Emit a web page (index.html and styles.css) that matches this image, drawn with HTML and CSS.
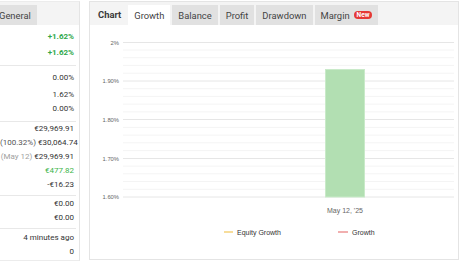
FILE: index.html
```html
<!DOCTYPE html>
<html lang="en">
<head>
    <meta charset="UTF-8">
    <title>Account - Growth</title>
    <link rel="stylesheet" href="styles.css">
</head>
<body>
    <div class="page">
        <div class="side">
            <div class="tabbar">
                <span class="tab general">General</span>
            </div>
            <div class="group g1">
                <div class="row h16 pos">+1.62%</div>
                <div class="row h16 pos">+1.62%</div>
            </div>
            <div class="group g2">
                <div class="row h20">0.00%</div>
                <div class="row">1.62%</div>
                <div class="row">0.00%</div>
            </div>
            <div class="group g3">
                <div class="row">€29,969.91</div>
                <div class="row"><span class="note">(100.32%)</span> €30,064.74</div>
                <div class="row"><span class="note light">(May 12)</span> €29,969.91</div>
                <div class="row gain">€477.82</div>
                <div class="row">-€16.23</div>
            </div>
            <div class="group g4">
                <div class="row">€0.00</div>
                <div class="row">€0.00</div>
            </div>
            <div class="group g5 last">
                <div class="row">4 minutes ago</div>
                <div class="row">0</div>
            </div>
        </div>

        <div class="main">
            <div class="tabbar">
                <span class="label">Chart</span>
                <span class="tab active">Growth</span>
                <span class="tab">Balance</span>
                <span class="tab">Profit</span>
                <span class="tab">Drawdown</span>
                <span class="tab">Margin <span class="badge">New</span></span>
            </div>

            <!-- growth chart, coords relative to panel body -->
            <svg class="chart" width="368" height="233" viewBox="0 0 368 233">
                <g class="minor">
                    <line x1="33" x2="364" y1="25" y2="25"/>
                    <line x1="33" x2="364" y1="32.7" y2="32.7"/>
                    <line x1="33" x2="364" y1="40.4" y2="40.4"/>
                    <line x1="33" x2="364" y1="48.2" y2="48.2"/>
                    <line x1="33" x2="364" y1="63.7" y2="63.7"/>
                    <line x1="33" x2="364" y1="71.4" y2="71.4"/>
                    <line x1="33" x2="364" y1="79.1" y2="79.1"/>
                    <line x1="33" x2="364" y1="86.9" y2="86.9"/>
                    <line x1="33" x2="364" y1="102.4" y2="102.4"/>
                    <line x1="33" x2="364" y1="110.1" y2="110.1"/>
                    <line x1="33" x2="364" y1="117.8" y2="117.8"/>
                    <line x1="33" x2="364" y1="125.6" y2="125.6"/>
                    <line x1="33" x2="364" y1="141.1" y2="141.1"/>
                    <line x1="33" x2="364" y1="148.8" y2="148.8"/>
                    <line x1="33" x2="364" y1="156.5" y2="156.5"/>
                    <line x1="33" x2="364" y1="164.3" y2="164.3"/>
                </g>
                <g class="major">
                    <line x1="33" x2="364" y1="17.5" y2="17.5"/>
                    <line x1="33" x2="364" y1="56" y2="56"/>
                    <line x1="33" x2="364" y1="94.5" y2="94.5"/>
                    <line x1="33" x2="364" y1="133.5" y2="133.5"/>
                    <line x1="33" x2="364" y1="172" y2="172"/>
                </g>
                <g class="ylab">
                    <text x="29" y="19.5">2%</text>
                    <text x="29" y="58">1.90%</text>
                    <text x="29" y="96.5">1.80%</text>
                    <text x="29" y="135.5">1.70%</text>
                    <text x="29" y="174">1.60%</text>
                </g>
                <rect class="bar" x="235.5" y="44.5" width="39" height="127.5"/>
                <text class="xlab" x="255" y="188">May 12, '25</text>
                <g class="legend">
                    <line class="eq" x1="134" x2="143" y1="207" y2="207"/>
                    <text x="147" y="209.5">Equity Growth</text>
                    <line class="gr" x1="248" x2="258" y1="207" y2="207"/>
                    <text x="262" y="209.5">Growth</text>
                </g>
            </svg>
        </div>
    </div>
</body>
</html>
```

FILE: styles.css
```css
body {
    margin: 0;
    padding: 0;
    background-color: #ffffff;
    font-family: Roboto, "Liberation Sans", sans-serif;
    color: #333333;
    overflow: hidden;
}
.page {
    display: flex;
    align-items: flex-start;
    padding-top: 1px;
}
.side {
    width: 79px;
    height: 258px;
    border-top: 1px solid #ececec;
    border-right: 1px solid #e4e4e4;
    border-bottom: 1px solid #ececec;
    box-sizing: content-box;
}
.main {
    width: 368px;
    height: 257px;
    margin-left: 9px;
    border: 1px solid #e4e4e4;
}
.tabbar {
    display: flex;
    align-items: flex-end;
    gap: 2px;
    height: 23px;
    background-color: #f4f4f4;
    font-size: 9.4px;
    white-space: nowrap;
}
.main .tabbar {
    padding-left: 8px;
}
.tab {
    display: flex;
    align-items: center;
    height: 20px;
    padding: 0 6px;
    background-color: #e1e1e1;
    color: #444444;
}
.tab.active {
    background-color: #ffffff;
}
.tab.general {
    margin-left: -7px;
    padding-right: 6px;
}
.label {
    height: 20px;
    line-height: 20px;
    font-weight: bold;
    color: #3a3a3a;
    margin-right: 5px;
}
.badge {
    display: inline-block;
    margin-left: 4px;
    padding: 0 3px;
    height: 8px;
    line-height: 8px;
    border-radius: 4px;
    background-color: #e53935;
    color: #ffffff;
    font-size: 6.5px;
    font-weight: bold;
}

/* stat values */
.group {
    margin-right: 3px;
    padding-right: 2px;
    border-bottom: 1px solid #e8e8e8;
    font-size: 8px;
    text-align: right;
}
.group.last {
    border-bottom: none;
}
.g1 { padding: 4px 2px 4px 0; }
.g2 { padding: 2px 2px 5px 0; }
.g3 { padding: 0 2px 3px 0; }
.g4 { padding: 1px 2px 3px 0; }
.g5 { padding: 2px 2px 0 0; }
.row {
    height: 14px;
    line-height: 14px;
    white-space: nowrap;
    color: #333333;
}
.row.h16 {
    height: 16px;
    line-height: 16px;
}
.row.h20 {
    height: 20px;
    line-height: 20px;
}
.pos {
    color: #2ea84a;
    font-weight: bold;
}
.gain {
    color: #3cb54a;
}
.note {
    color: #555555;
}
.note.light {
    color: #a0a0a0;
}

/* chart */
.chart {
    display: block;
    font-family: "Liberation Sans", Arial, sans-serif;
}
.minor line {
    stroke: #f4f4f4;
    stroke-width: 1;
}
.major line {
    stroke: #e6e6e6;
    stroke-width: 1;
}
.ylab text {
    font-size: 5.8px;
    fill: #666666;
    text-anchor: end;
}
.bar {
    fill: #b2dfb2;
    stroke: #c9eac9;
    stroke-width: 1;
}
.xlab {
    font-size: 7px;
    fill: #666666;
    text-anchor: middle;
}
.legend text {
    font-size: 7px;
    fill: #333333;
}
.legend line {
    stroke-width: 1.5;
}
.legend .eq {
    stroke: #f5d27a;
}
.legend .gr {
    stroke: #ec9494;
}
```
